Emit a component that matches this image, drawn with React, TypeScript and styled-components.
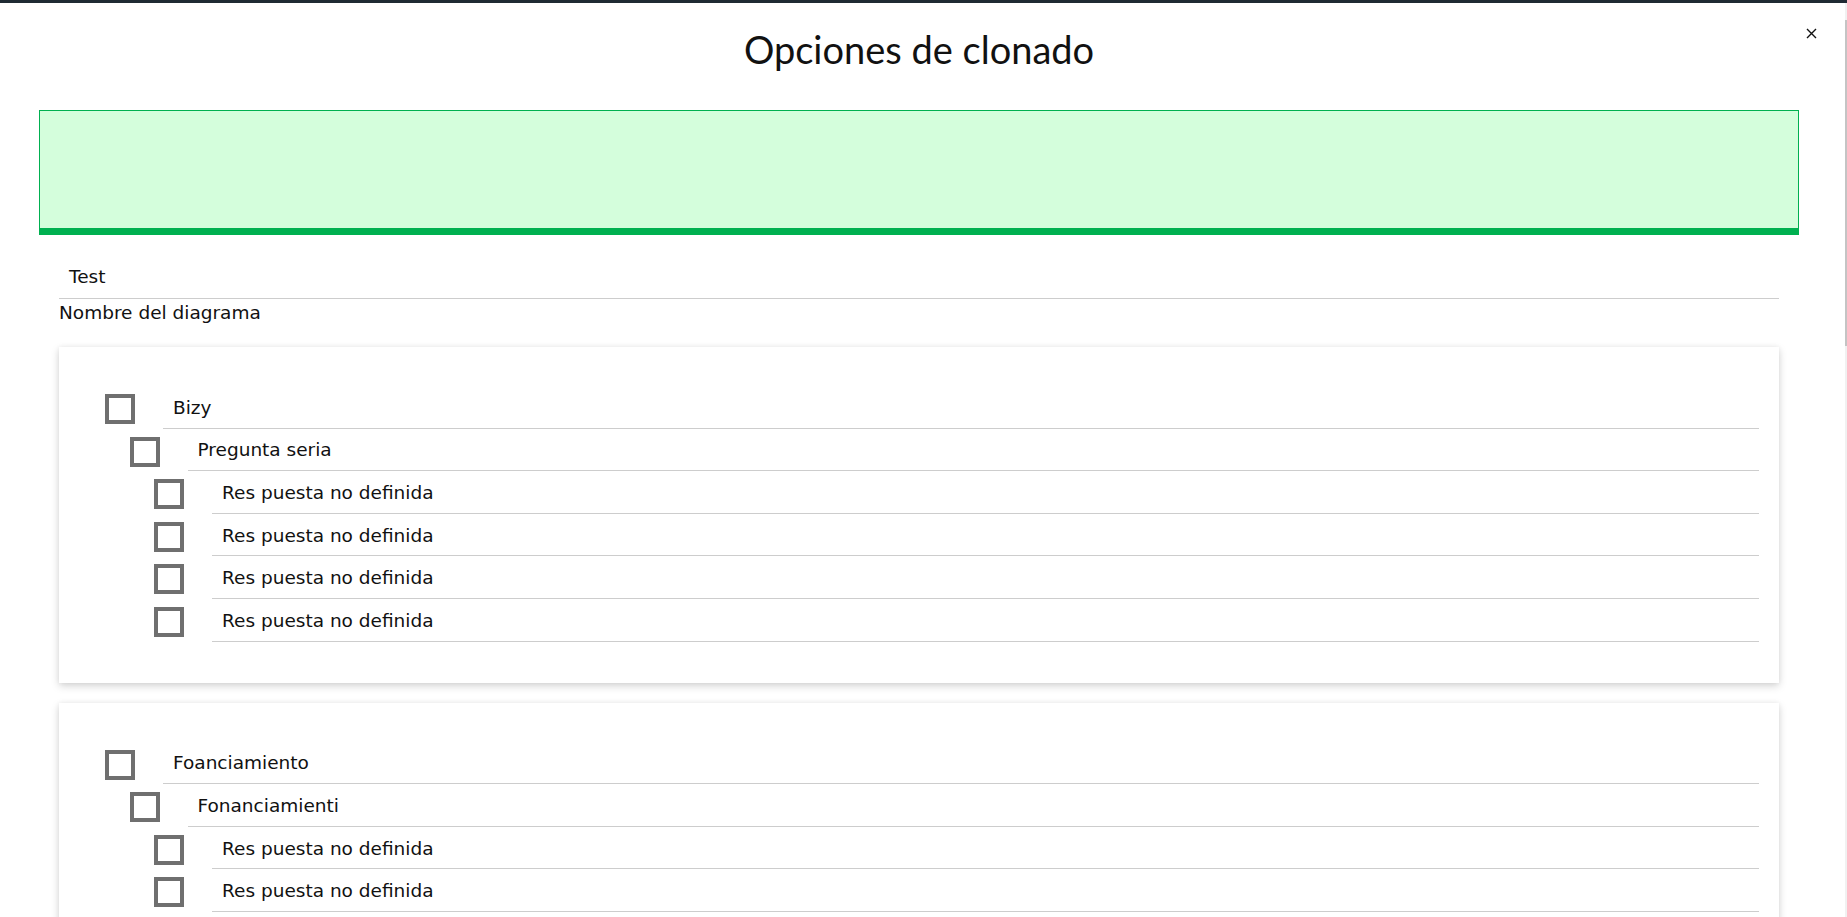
import React from "react";
import styled, { createGlobalStyle } from "styled-components";

const GlobalStyle = createGlobalStyle`
  html, body { margin: 0; padding: 0; background: #ffffff; }
  body { font-family: "DejaVu Sans", Verdana, sans-serif; color: #111; }
  * { box-sizing: border-box; }
`;

const Window = styled.div`
  position: relative;
  height: 917px;
  overflow: hidden;
  border-top: 3px solid #1f2a33;
  display: flex;
  background: #ffffff;
`;

const Main = styled.div`
  flex: 1;
  min-width: 0;
  display: flex;
  flex-direction: column;
`;

const Header = styled.header`
  display: flex;
  justify-content: center;
  align-items: flex-start;
  padding: 24px 7px 0 0;
  height: 107px;
  flex-shrink: 0;
`;

const Title = styled.h1`
  margin: 0;
  text-align: center;
  font-family: Lato, "Open Sans", sans-serif;
  font-weight: 400;
  font-size: 38px;
  line-height: 1.2;
  color: #111;
`;

const CloseButton = styled.button`
  position: absolute;
  top: 25px;
  right: 30px;
  border: 0;
  background: transparent;
  padding: 0;
  width: 11px;
  height: 11px;
  display: flex;
  cursor: pointer;
`;

const Banner = styled.div`
  margin: 0 46px 0 39px;
  height: 125px;
  flex-shrink: 0;
  background: #d4fedc;
  border: 1px solid #00b050;
  border-bottom: 7px solid #00b050;
`;

const Body = styled.div`
  margin: 0 66px 0 59px;
  display: flex;
  flex-direction: column;
`;

const FieldValue = styled.div`
  margin-top: 21px;
  height: 42.6px;
  padding-left: 10px;
  display: flex;
  align-items: center;
  border-bottom: 1px solid #cdcdcd;
  font-size: 18.5px;
`;

const FieldLabel = styled.div`
  margin-top: 3px;
  font-size: 18.5px;
`;

const CardList = styled.div`
  margin-top: 24.5px;
  display: flex;
  flex-direction: column;
  gap: 20px;
`;

const Card = styled.section`
  background: #ffffff;
  padding: 39px 20px 41px 46px;
  box-shadow: 0 3px 8px rgba(0, 0, 0, 0.17), 0 0 5px rgba(0, 0, 0, 0.05);
`;

const Row = styled.div<{ $level: number }>`
  display: flex;
  align-items: flex-start;
  gap: 28px;
  padding-left: ${(p) => p.$level * 24.5}px;
`;

const Box = styled.span`
  width: 30px;
  height: 30px;
  margin-top: 8px;
  flex-shrink: 0;
  border: 4px solid #6f6f6f;
  background: #ffffff;
`;

const RowLabel = styled.div`
  flex: 1;
  height: 42.6px;
  padding: 1px 0 0 10px;
  display: flex;
  align-items: center;
  border-bottom: 1px solid #cdcdcd;
  font-size: 18.5px;
`;

const ScrollTrack = styled.div`
  width: 2px;
  flex-shrink: 0;
  background: #f1f1f1;
  padding-top: 17px;
`;

const ScrollThumb = styled.div`
  height: 326px;
  background: #c4c4c4;
`;

type Item = { label: string; level: number };

const groups: Item[][] = [
  [
    { label: "Bizy", level: 0 },
    { label: "Pregunta seria", level: 1 },
    { label: "Res puesta no definida", level: 2 },
    { label: "Res puesta no definida", level: 2 },
    { label: "Res puesta no definida", level: 2 },
    { label: "Res puesta no definida", level: 2 },
  ],
  [
    { label: "Foanciamiento", level: 0 },
    { label: "Fonanciamienti", level: 1 },
    { label: "Res puesta no definida", level: 2 },
    { label: "Res puesta no definida", level: 2 },
    { label: "Res puesta no definida", level: 2 },
    { label: "Res puesta no definida", level: 2 },
  ],
];

const CloseIcon = () => (
  <svg width="11" height="11" viewBox="0 0 11 11" aria-hidden="true">
    <path d="M1 1 L10 10 M10 1 L1 10" stroke="#111" strokeWidth="1.4" fill="none" />
  </svg>
);

export default function App() {
  return (
    <>
      <GlobalStyle />
      <Window>
        <Main>
          <Header>
            <Title>Opciones de clonado</Title>
          </Header>
          <Banner />
          <Body>
            <FieldValue>Test</FieldValue>
            <FieldLabel>Nombre del diagrama</FieldLabel>
            <CardList>
              {groups.map((g, gi) => (
                <Card key={gi}>
                  {g.map((it, i) => (
                    <Row key={i} $level={it.level}>
                      <Box />
                      <RowLabel>{it.label}</RowLabel>
                    </Row>
                  ))}
                </Card>
              ))}
            </CardList>
          </Body>
        </Main>
        <ScrollTrack>
          <ScrollThumb />
        </ScrollTrack>
        <CloseButton aria-label="Cerrar">
          <CloseIcon />
        </CloseButton>
      </Window>
    </>
  );
}
